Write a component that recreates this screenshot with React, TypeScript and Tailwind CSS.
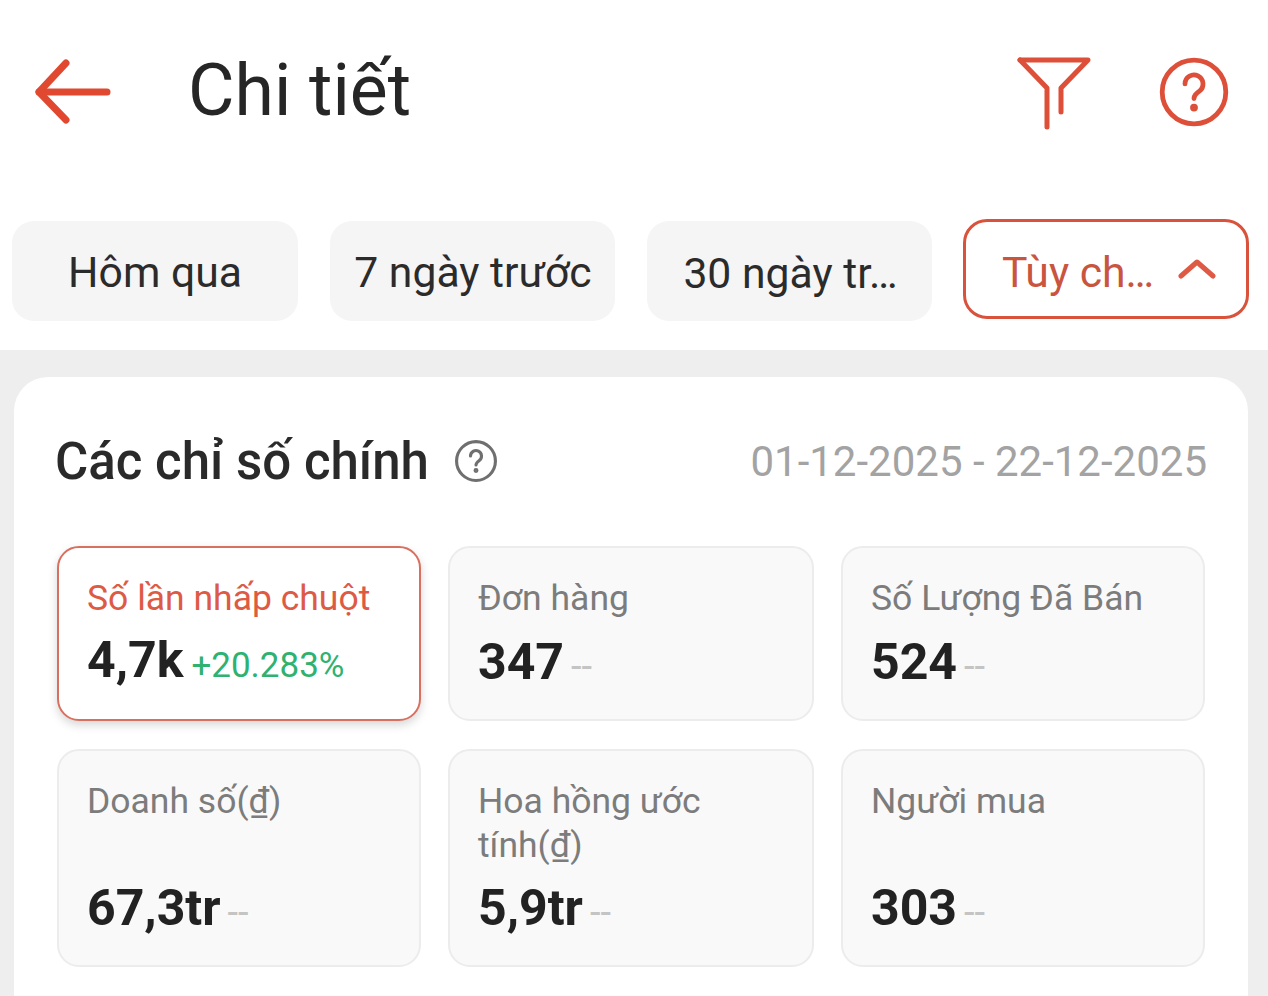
const FONT = "font-['Roboto','Noto_Sans',sans-serif]"

const METRICS = [
  { label: "Số lần nhấp chuột", value: "4,7k", change: "+20.283%", active: true },
  { label: "Đơn hàng", value: "347", change: "--" },
  { label: "Số Lượng Đã Bán", value: "524", change: "--" },
  { label: "Doanh số(₫)", value: "67,3tr", change: "--" },
  { label: "Hoa hồng ước tính(₫)", value: "5,9tr", change: "--" },
  { label: "Người mua", value: "303", change: "--" },
]

function HelpIcon({ size, stroke }: { size: number; stroke: number }) {
  return (
    <svg width={size} height={size} viewBox="0 0 24 24" fill="none" stroke="currentColor" strokeWidth={stroke} strokeLinecap="round">
      <circle cx="12" cy="12" r="10.6" />
      <path d="M9 9.3a3 3 0 1 1 4.8 2.4c-1.2.9-1.8 1.4-1.8 2.5" />
      <circle cx="12" cy="17.2" r="0.5" fill="currentColor" />
    </svg>
  )
}

function BackIcon() {
  return (
    <svg width="80" height="80" viewBox="0 0 80 80" fill="none" stroke="currentColor" strokeWidth="7" strokeLinecap="round" strokeLinejoin="round" className="mt-[2px] shrink-0 text-[#e0492f]">
      <path d="M75 40H7" />
      <path d="M34 11L7 40l27 28" />
    </svg>
  )
}

function FilterIcon() {
  return (
    <svg width="76" height="76" viewBox="0 0 76 76" fill="none" stroke="currentColor" strokeWidth="5" strokeLinecap="round" strokeLinejoin="round" className="mt-[8px]">
      <path d="M4 3h68L45 31v24" />
      <path d="M4 3l27 28v39" />
    </svg>
  )
}

function ChevronIcon() {
  return (
    <svg width="38" height="20" viewBox="0 0 38 20" fill="none" stroke="currentColor" strokeWidth="5" strokeLinecap="round" strokeLinejoin="round" className="text-[#de5a44]">
      <path d="M3 17L19 3l16 14" />
    </svg>
  )
}

function MetricCard({ label, value, change, active }: { label: string; value: string; change: string; active?: boolean }) {
  return (
    <div
      className={`flex flex-col rounded-[22px] border-2 pb-[25px] pl-[28px] pr-4 pt-[28px] ${
        active
          ? "border-[#d9705f] bg-white shadow-[0_4px_10px_rgba(0,0,0,0.16)]"
          : "border-[#ececec] bg-[#f9f9f9]"
      }`}
    >
      <div className={`text-[35.5px] leading-[44px] ${active ? "text-[#dd5b44]" : "text-[#7c7c7c]"}`}>{label}</div>
      <div className="mt-auto flex items-baseline">
        <span className="text-[50px] font-bold leading-[56px] text-[#222222]">{value}</span>
        {active ? (
          <span className="ml-2 text-[35px] leading-[56px] text-[#2fb170]">{change}</span>
        ) : (
          <span className="ml-[7px] text-[38px] leading-[56px] text-[#c4c4c4]">{change}</span>
        )}
      </div>
    </div>
  )
}

export default function App() {
  return (
    <div className={`${FONT} h-[996px] w-[1268px] overflow-hidden bg-white`}>
      <header className="flex h-[182px] items-center pl-[32px] pr-[38px]">
        <BackIcon />
        <h1 className="ml-[76px] text-[71.5px] font-normal leading-none text-[#262626]">Chi tiết</h1>
        <div className="ml-auto flex items-center gap-[66px] text-[#dd4f38]">
          <FilterIcon />
          <span className="mt-[2px]">
            <HelpIcon size={72} stroke={1.6} />
          </span>
        </div>
      </header>

      <div className="flex h-[168px] items-start gap-[32px] pl-[12px] pt-[39px] text-[42.7px] leading-none text-[#2b2b2b]">
        <div className="flex h-[100px] w-[286px] items-center justify-center rounded-[22px] bg-[#f5f5f5] pt-[3px]">Hôm qua</div>
        <div className="flex h-[100px] w-[285px] items-center justify-center rounded-[22px] bg-[#f5f5f5] pl-[1px] pt-[3px]">7 ngày trước</div>
        <div className="flex h-[100px] w-[285px] items-center justify-center rounded-[22px] bg-[#f5f5f5] pl-[2px] pt-[5px]">30 ngày tr…</div>
        <div className="-ml-[1px] -mt-[2px] flex h-[100px] w-[286px] items-center justify-center gap-[24px] rounded-[24px] border-[3px] border-[#d9533c] pl-[6px] text-[#c9553f]">
          <span className="pt-[6px]">Tùy ch…</span>
          <ChevronIcon />
        </div>
      </div>

      <main className="h-[646px] bg-[#eeeeee] px-[14px] pt-[27px]">
        <section className="h-[700px] w-[1234px] rounded-[34px] bg-white pl-[42px] pr-[41px] pt-[52px]">
          <div className="flex h-[64px] items-center justify-between">
            <div className="flex items-center gap-[25px]">
              <h2 className="-ml-[1px] text-[51px] font-medium leading-none text-[#2a2a2a]">Các chỉ số chính</h2>
              <span className="text-[#6f6f6f]">
                <HelpIcon size={44} stroke={1.7} />
              </span>
            </div>
            <span className="text-[42px] text-[#a3a3a3]">01-12-2025 - 22-12-2025</span>
          </div>
          <div className="ml-[1px] mt-[53px] grid grid-cols-[364px_366px_364px] grid-rows-[175px_218px] gap-x-[27px] gap-y-[28px]">
            {METRICS.map((m) => (
              <MetricCard key={m.label} {...m} />
            ))}
          </div>
        </section>
      </main>
    </div>
  )
}
